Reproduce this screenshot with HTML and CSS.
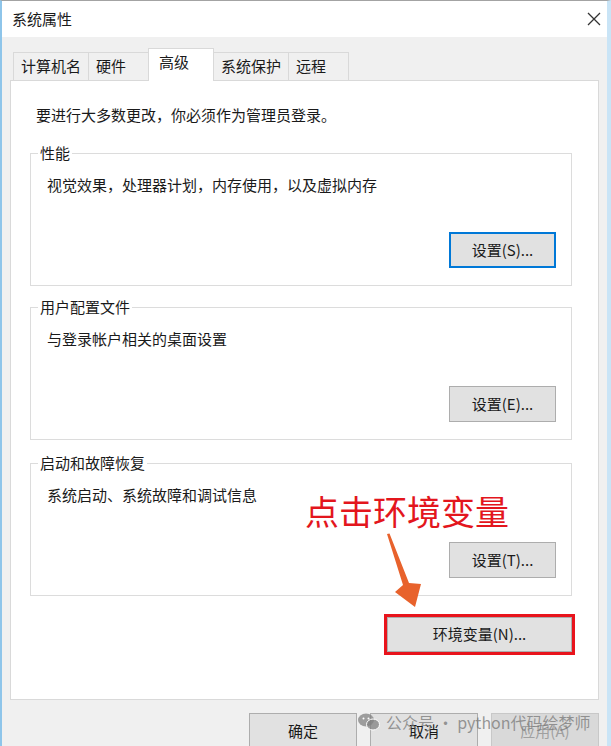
FILE: index.html
```html
<!DOCTYPE html>
<html lang="zh-CN">
<head>
    <meta charset="UTF-8">
    <meta name="viewport" content="width=device-width, initial-scale=1.0">
    <title>系统属性</title>
    <link rel="stylesheet" href="styles.css">
</head>
<body>

    <div class="window">
        <div class="titlebar">
            <span class="title">系统属性</span>
            <svg class="close" width="14" height="14" viewBox="0 0 14 14">
                <path d="M1 1 L13 13 M13 1 L1 13"></path>
            </svg>
        </div>

        <div class="content">
            <div class="tabs">
                <div class="tab">计算机名</div>
                <div class="tab">硬件</div>
                <div class="tab active">高级</div>
                <div class="tab">系统保护</div>
                <div class="tab">远程</div>
            </div>

            <div class="panel">
                <p class="notice">要进行大多数更改，你必须作为管理员登录。</p>

                <div class="group">
                    <div class="group-title">性能</div>
                    <div class="group-desc">视觉效果，处理器计划，内存使用，以及虚拟内存</div>
                    <button class="btn btn-focus">设置(S)...</button>
                </div>

                <div class="group group-2">
                    <div class="group-title">用户配置文件</div>
                    <div class="group-desc">与登录帐户相关的桌面设置</div>
                    <button class="btn">设置(E)...</button>
                </div>

                <div class="group group-3">
                    <div class="group-title">启动和故障恢复</div>
                    <div class="group-desc">系统启动、系统故障和调试信息</div>
                    <button class="btn">设置(T)...</button>
                </div>

                <button class="btn btn-env">环境变量(N)...</button>
            </div>

            <div class="actions">
                <button class="btn btn-wide">确定</button>
                <button class="btn btn-wide">取消</button>
                <button class="btn btn-wide" disabled>应用(A)</button>
            </div>
        </div>

        <!-- red hint over the dialog -->
        <div class="callout">点击环境变量</div>
        <svg class="callout-arrow" width="45" height="82" viewBox="0 0 45 82">
            <polygon points="5,5 7.5,4.5 27,54 39,55 33,78 13,63 21,56"></polygon>
        </svg>

        <div class="watermark">
            <svg class="wx" width="22" height="18" viewBox="0 0 22 18">
                <ellipse cx="8" cy="7" rx="8" ry="6.5"></ellipse>
                <ellipse class="wx-small" cx="15" cy="11.5" rx="6.5" ry="5.5"></ellipse>
                <circle class="eye" cx="5.5" cy="5.5" r="1"></circle>
                <circle class="eye" cx="10.5" cy="5.5" r="1"></circle>
            </svg>
            <span>公众号 · python代码绘梦师</span>
        </div>
    </div>

</body>
</html>
```

FILE: styles.css
```css
body {
    margin: 0;
    font-family: "Noto Sans CJK SC", "Noto Sans", sans-serif;
    font-size: 15px;
    color: #1a1a1a;
    background: #f0f0f0;
}
.window {
    position: relative;
    width: 611px;
    height: 746px;
    box-sizing: border-box;
    border-top: 1px solid #a3a3a3;
    border-left: 2px solid #8ec5ea;
    border-right: 4px solid #c9e4f6;
    background: #f0f0f0;
    overflow: hidden;
}
.titlebar {
    height: 36px;
    background: #fff;
    display: flex;
    align-items: center;
    justify-content: space-between;
    padding: 0 6px 0 10px;
}
.title {
    line-height: 20px;
}
.close path {
    stroke: #333;
    stroke-width: 1.3;
    fill: none;
}
.content {
    padding: 11px 8px 0 8px;
}

/* tab strip */
.tabs {
    display: flex;
    align-items: flex-end;
    height: 32px;
    margin-left: 3px;
}
.tab {
    height: 28px;
    min-width: 61px;
    box-sizing: border-box;
    padding: 0 7px;
    line-height: 26px;
    border: 1px solid #d9d9d9;
    border-bottom: none;
    margin-right: -1px;
    background: #f0f0f0;
}
.tab.active {
    position: relative;
    z-index: 1;
    height: 33px;
    min-width: 66px;
    margin-bottom: -1px;
    padding-left: 10px;
    line-height: 26px;
    background: #fff;
}

.panel {
    height: 620px;
    box-sizing: border-box;
    border: 1px solid #d9d9d9;
    background: #fff;
    padding: 0 26px 0 19px;
    display: flex;
    flex-direction: column;
}
.notice {
    margin: 0 0 0 6px;
    padding-top: 24px;
    line-height: 20px;
}

/* group boxes */
.group {
    margin-top: 28px;
    height: 133px;
    box-sizing: border-box;
    border: 1px solid #dcdcdc;
    padding: 0 15px 17px 16px;
    display: flex;
    flex-direction: column;
}
.group-2 {
    margin-top: 21px;
}
.group-3 {
    margin-top: 23px;
}
.group-title {
    align-self: flex-start;
    margin: -11px 0 0 -9px;
    padding: 0 2px;
    line-height: 20px;
    background: #fff;
}
.group-desc {
    margin-top: 12px;
    line-height: 20px;
}

.btn {
    font-family: inherit;
    font-size: 15px;
    color: #1a1a1a;
    width: 107px;
    height: 36px;
    padding: 0 0 2px;
    background: #e1e1e1;
    border: 1px solid #adadad;
}
.group .btn {
    margin-top: auto;
    align-self: flex-end;
}
.btn-focus {
    border: 2px solid #0078d7;
}
.btn-env {
    align-self: flex-end;
    margin-top: 21px;
    width: 185px;
    height: 35px;
    outline: 3px solid #e8141c;
}
.actions {
    display: flex;
    justify-content: flex-end;
    gap: 13px;
    margin-top: 13px;
}
.btn-wide {
    width: 108px;
}
.btn:disabled {
    background: #d9d9d9;
    border-color: #c8c8c8;
    color: #a0a0a0;
}

/* annotation */
.callout {
    position: absolute;
    left: 303px;
    top: 490px;
    font-size: 34px;
    line-height: 40px;
    color: #e3161d;
}
.callout-arrow {
    position: absolute;
    left: 380px;
    top: 528px;
}
.callout-arrow polygon {
    fill: #e8622c;
}

.watermark {
    position: absolute;
    left: 356px;
    top: 709px;
    display: flex;
    align-items: center;
    gap: 6px;
    font-size: 16px;
    line-height: 24px;
    color: rgba(120, 120, 120, 0.75);
}
.wx ellipse {
    fill: rgba(130, 130, 130, 0.75);
}
.wx .wx-small {
    stroke: #fff;
    stroke-width: 1;
}
.wx .eye {
    fill: #fff;
}
```
